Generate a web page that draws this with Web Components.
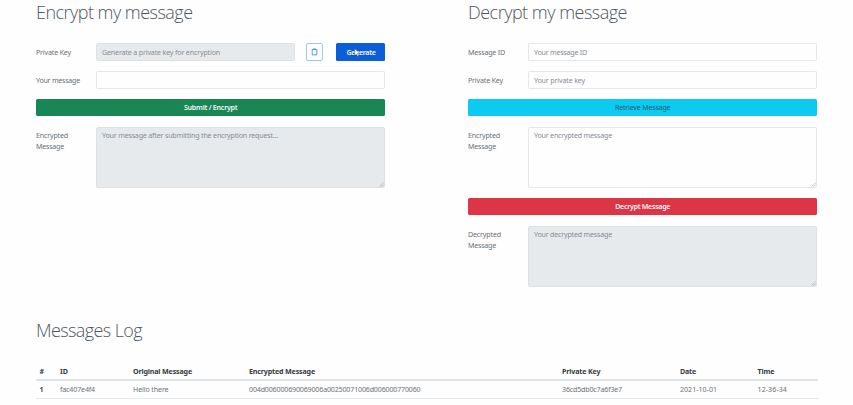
<!DOCTYPE html>
<html lang="en"><head><meta charset="utf-8"><title>Encrypt my message</title>
<style>
body{margin:0;background:#fefefe;width:853px;height:405px;overflow:hidden;color:#6b7178;font:7.1px/11px "Noto Sans","Open Sans",sans-serif}
</style></head><body>
<crypto-page></crypto-page>
<script>
const define=(name,html,setup)=>{
  const t=document.createElement('template');t.innerHTML=html;
  customElements.define(name,class extends HTMLElement{
    constructor(){super();this.attachShadow({mode:'open'}).append(t.content.cloneNode(true));}
    connectedCallback(){if(setup)setup(this,this.shadowRoot);}
  });
};
/* Text run whose tracking is adjusted to an intended width. */
define('fit-text',`<style>:host{display:inline-block;white-space:nowrap}span{display:inline-block}</style><span><slot></slot></span>`,(el,r)=>{
  const s=r.querySelector('span'),w=+el.getAttribute('w');
  const n=el.textContent.length;
  if(w&&n>1){const d=(w-s.getBoundingClientRect().width)/n;s.style.letterSpacing=d+'px';}
});
define('page-title',`<style>:host{display:block;font-family:"Open Sans","Noto Sans",sans-serif;font-size:18px;line-height:22px;font-weight:300;color:#50565e}</style><slot></slot>`);
define('form-row',`<style>:host{display:grid;grid-template-columns:60px 1fr;align-items:start}
.label{padding-top:4px;display:flex;flex-direction:column}:host([area]) .label{padding-top:3px}.body{display:flex;min-width:0}</style>
<div class="label"><slot name="label"></slot></div><div class="body"><slot></slot></div>`);
define('text-field',`<style>:host{display:block;box-sizing:border-box;flex:1;height:18px;border:1px solid #e5e7e9;border-bottom-color:#e4e6e8;border-radius:2px;background:#fefefe;padding:3px 5px;color:#868d95;position:relative}
:host([readonly]){background:#e6eaed;border-color:#dce1e5}
:host([area]){height:61px;padding-top:2px}
svg{display:none;position:absolute;right:0;bottom:0}:host([area]) svg{display:block}</style>
<slot></slot><svg width="5" height="5" viewBox="0 0 5 5"><path d="M.5 4.7 4.7.5M2.7 4.7l2-2" stroke="#a5a9ad" stroke-width=".7"/></svg>`);
define('action-button',`<style>:host{display:flex;box-sizing:border-box;height:17px;align-items:center;justify-content:center;border-radius:1.5px;background:var(--bg);color:var(--fg,#f4f8f7);font-weight:var(--weight,600);position:relative}</style><slot></slot>`);
define('copy-button',`<style>:host{display:flex;box-sizing:border-box;width:17px;height:18px;margin:0 13px 0 11px;align-items:center;justify-content:center;border:1px solid #9fc8f5;border-radius:2px;background:#fdfeff}</style>
<svg width="7" height="8" viewBox="0 0 7 8" fill="none"><path d="M1.2 1.5h4.6v5.4H1.2z" stroke="#4b91ec" stroke-width=".9"/><path d="M2.2.5h2.6v1.3H2.2z" fill="#4b91ec"/></svg>`);
define('mouse-pointer',`<style>:host{position:absolute;left:18px;top:5px;width:7px;height:10px}svg{display:block}</style><svg width="7" height="10" viewBox="0 0 7 10"><path d="M.7.5v7.1l1.7-1.5 1.1 2.5 1.2-.6-1.1-2.4h2.2z" fill="#fff" stroke="#223" stroke-width=".35"/></svg>`);
define('log-table',`<style>:host{display:block}
.r{display:grid;grid-template-columns:20.5px 73px 116px 313px 118px 77.5px 1fr;padding-left:3.5px;box-sizing:border-box}
.h{height:20px;padding-top:5px;border-bottom:2px solid #dde3e7;color:#34393f;font-weight:700}
.d{height:18px;padding-top:3px;border-bottom:1px solid #e6e9eb}b{color:#474c52}</style>
<div class="r h"><span>#</span><fit-text w="8">ID</fit-text><fit-text w="59">Original Message</fit-text><fit-text w="66">Encrypted Message</fit-text><fit-text w="38.5">Private Key</fit-text><fit-text w="16">Date</fit-text><fit-text w="17">Time</fit-text></div>
<div class="r d"><b>1</b><fit-text w="35">fac407e4f4</fit-text><fit-text w="35.5">Hello there</fit-text><fit-text w="171.5">004d006000690069006a00250071006d006000770060</fit-text><fit-text w="60">36cd5db0c7a6f3e7</fit-text><fit-text w="37">2021-10-01</fit-text><fit-text w="29.5">12-36-34</fit-text></div>`);
define('crypto-page',`<style>:host{display:block;padding:1px 35.5px 0 36px}
.forms{display:grid;grid-template-columns:349.4px 349.4px;column-gap:82.6px;height:318px}
section{display:flex;flex-direction:column}
page-title{margin-bottom:20px}
form-row{margin-bottom:10px}action-button.wide{margin-bottom:11px}
.log{display:block;margin-bottom:20px}
.gen{width:49px;padding-top:1px;height:18px}</style>
<div class="forms"><section>
<page-title><fit-text w="156.5">Encrypt my message</fit-text></page-title>
<form-row><fit-text slot="label" w="35">Private Key</fit-text><text-field readonly><fit-text w="118">Generate a private key for encryption</fit-text></text-field><copy-button></copy-button><action-button class="gen" style="--bg:#0b5ed7"><fit-text w="29">Generate</fit-text><mouse-pointer></mouse-pointer></action-button></form-row>
<form-row><fit-text slot="label" w="44">Your message</fit-text><text-field></text-field></form-row>
<action-button class="wide" style="--bg:#198754"><fit-text w="53.5">Submit / Encrypt</fit-text></action-button>
<form-row area><fit-text slot="label" w="32">Encrypted</fit-text><fit-text slot="label" w="28">Message</fit-text><text-field area readonly><fit-text w="176">Your message after submitting the encryption request...</fit-text></text-field></form-row>
</section><section>
<page-title><fit-text w="159">Decrypt my message</fit-text></page-title>
<form-row><fit-text slot="label" w="37">Message ID</fit-text><text-field><fit-text w="53">Your message ID</fit-text></text-field></form-row>
<form-row><fit-text slot="label" w="35">Private Key</fit-text><text-field><fit-text w="51">Your private key</fit-text></text-field></form-row>
<action-button class="wide" style="--bg:#0dcaf0;--fg:#205f70;--weight:400"><fit-text w="55.5">Retrieve Message</fit-text></action-button>
<form-row area><fit-text slot="label" w="32">Encrypted</fit-text><fit-text slot="label" w="28">Message</fit-text><text-field area><fit-text w="78">Your encrypted message</fit-text></text-field></form-row>
<action-button class="wide" style="--bg:#dc3545"><fit-text w="55">Decrypt Message</fit-text></action-button>
<form-row area><fit-text slot="label" w="33">Decrypted</fit-text><fit-text slot="label" w="28">Message</fit-text><text-field area readonly><fit-text w="78">Your decrypted message</fit-text></text-field></form-row>
</section></div>
<page-title class="log"><fit-text w="106">Messages Log</fit-text></page-title>
<log-table></log-table>`);
</script></body></html>
